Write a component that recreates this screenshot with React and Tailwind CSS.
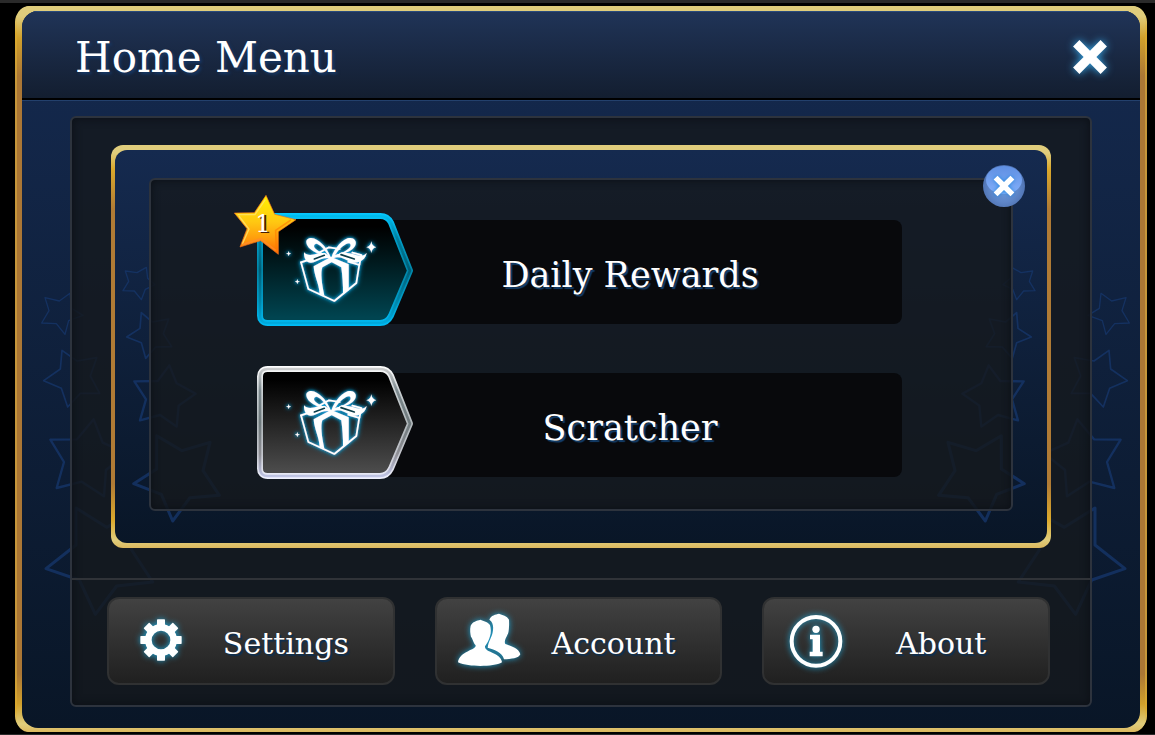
import React from "react";

const OUTER_STARS = [
  "135,173 178,183 210,160 215,205 249,226 206,242 195,283 169,251 125,249 147,212",
  "186,331 231,363 290,353 271,408 299,460 241,460 203,501 184,445 131,422 181,387",
  "281,538 308,608 380,640 318,690 312,769 245,725 170,744 192,666 151,599 231,598",
  "228,804 320,862 404,815 395,930 458,1026 350,1038 286,1123 238,1020 138,986 228,915",
];

const INNER_STARS = [
  "376,93 411,98 439,82 443,115 465,134 436,148 424,179 403,153 369,152 386,124",
  "424,218 457,246 506,237 490,281 515,320 467,321 437,355 424,308 380,291 420,265",
  "508,376 530,430 587,461 536,497 530,560 480,525 420,541 438,478 403,424 473,423",
  "470,587 546,632 630,607 609,692 658,766 570,773 518,843 484,763 401,731 470,687",
];

const STAR_STROKES = [4, 5, 7, 9];

function StarTrail({ stars, viewBox, className }) {
  return (
    <svg viewBox={viewBox} className={className} aria-hidden="true">
      {stars.map((points, i) => (
        <polygon
          key={points}
          points={points}
          fill="none"
          stroke="#16366a"
          strokeOpacity="0.78"
          strokeWidth={STAR_STROKES[i]}
          strokeLinejoin="round"
        />
      ))}
    </svg>
  );
}

function Cross({ className }) {
  return (
    <svg viewBox="0 0 34 34" className={className} aria-hidden="true">
      <path
        d="M7 1 17 11 27 1 33 7 23 17 33 27 27 33 17 23 7 33 1 27 11 17 1 7Z"
        fill="#fff"
      />
    </svg>
  );
}

const TONES = {
  cyan: {
    edge: ["#06c8ff", "#009cc8", "#0186a8", "#009cc8", "#00bdf6"],
    core: ["#00c4f8", "#00809f", "#005f77", "#0085a8", "#00aee4"],
    fill: ["#000", "#001316", "#004450"],
  },
  silver: {
    edge: ["#ffffff", "#c9cfd2", "#b0b7ba", "#c3c5cc", "#f0f2ff"],
    core: ["#d5d5d5", "#7c898e", "#6f7a7d", "#8f8f95", "#c6cbee"],
    fill: ["#000", "#161616", "#4b4b4b"],
  },
};

const STOPS = ["0", "0.22", "0.5", "0.78", "1"];
const TAG =
  "M128 93H466C483 93 491 100 498 113L555 257L498 392C491 406 481 414 465 414H128C113 414 105 405 105 392V115C105 102 113 93 128 93Z";

function GiftTag({ tone }) {
  const t = TONES[tone];
  return (
    <svg viewBox="96 84 471 339" className="relative z-10 h-[113px] w-[157px] shrink-0" aria-hidden="true">
      <defs>
        <linearGradient id={`${tone}-edge`} gradientUnits="userSpaceOnUse" x1="0" x2="0" y1="84" y2="423">
          {t.edge.map((c, i) => (
            <stop key={i} offset={STOPS[i]} stopColor={c} />
          ))}
        </linearGradient>
        <linearGradient id={`${tone}-core`} gradientUnits="userSpaceOnUse" x1="0" x2="0" y1="84" y2="423">
          {t.core.map((c, i) => (
            <stop key={i} offset={STOPS[i]} stopColor={c} />
          ))}
        </linearGradient>
        <linearGradient id={`${tone}-fill`} x1="0" x2="0" y1="0" y2="1">
          <stop offset="0.1" stopColor={t.fill[0]} />
          <stop offset="0.35" stopColor={t.fill[1]} />
          <stop offset="0.95" stopColor={t.fill[2]} />
        </linearGradient>
        <filter id={`${tone}-glow`} x="-20%" y="-20%" width="140%" height="140%">
          <feDropShadow dx="0" dy="0" stdDeviation="4" floodColor="#1fb4ec" />
          <feDropShadow dx="0" dy="0" stdDeviation="7" floodColor="#1286b8" />
        </filter>
      </defs>
      <path d={TAG} fill={`url(#${tone}-fill)`} stroke={`url(#${tone}-edge)`} strokeWidth="18" strokeLinejoin="round" />
      <path d={TAG} fill="none" stroke={`url(#${tone}-core)`} strokeWidth="8" strokeLinejoin="round" />
      <g filter={`url(#${tone}-glow)`}>
        <g fill="none" stroke="#fff" strokeWidth="5" strokeLinejoin="round" strokeLinecap="round">
          <path d="M228 232 250 312 328 348 394 294 403 238" />
          <path d="M228 232 262 221M282 203 312 187 344 192M382 203 409 210 403 240 370 230" />
          <path d="M248 222 290 212 318 220 352 205" strokeWidth="4" />
        </g>
        <g fill="#fff">
          <path d="M266 244 318 216 322 230 292 247C286 262 290 296 298 332L284 326C282 296 268 274 266 244Z" />
          <path d="M318 216 371 238 371 316 354 328C355 300 352 270 349 247L318 230Z" />
          <path
            fillRule="evenodd"
            d="M320 224C304 210 248 204 244 172C243 158 262 154 276 165C298 178 310 198 320 224ZM310 213C302 198 290 182 276 176C266 176 264 184 272 192C284 202 298 208 310 213Z"
          />
          <path
            fillRule="evenodd"
            d="M318 224C322 200 344 170 368 160C384 155 397 166 391 181C380 206 334 208 318 224ZM330 211C346 206 364 200 375 187C381 177 373 171 362 178C348 186 338 197 330 211Z"
          />
          <path d="M237 202C246 212 258 212 284 204L300 204 320 220C298 216 284 224 266 232C248 238 236 224 237 202Z" />
          <path d="M425 203C418 214 404 214 380 206L350 202 320 220C342 212 358 220 376 231C396 238 422 226 425 203Z" />
        </g>
        <path d="M268 222 298 211M348 209 388 222" stroke="#0a3d4a" strokeWidth="5" strokeLinecap="round" />
        <path
          d="M439 169Q441 184 454 187Q441 189 439 204Q437 189 424 187Q437 184 439 169ZM191 198 193 204 199 206 193 208 191 214 189 208 183 206 189 204ZM217 282 219 288 225 290 219 292 217 298 215 292 209 290 215 288Z"
          fill="#fff"
        />
      </g>
    </svg>
  );
}

function StarBadge({ count }) {
  return (
    <span className="absolute -left-6 -top-5 z-20 flex h-16 w-16 items-center justify-center">
      <svg viewBox="22 22 192 192" className="absolute inset-0 h-16 w-16" aria-hidden="true">
        <defs>
          <linearGradient id="badge-gold" x1="0" x2="0" y1="0" y2="1">
            <stop offset="0" stopColor="#fff200" />
            <stop offset="0.45" stopColor="#ffc812" />
            <stop offset="0.75" stopColor="#ff9a0c" />
            <stop offset="1" stopColor="#ff6a00" />
          </linearGradient>
        </defs>
        <polygon
          points="121,29 147,86 211,102 158,138 158,206 105,165 43,184 64,129 26,82 86,81"
          fill="url(#badge-gold)"
          stroke="#f0701c"
          strokeWidth="2"
          strokeLinejoin="round"
        />
        <path d="M36 87 88 87 119 42M50 175 70 130 40 91" fill="none" stroke="#ffe36a" strokeWidth="4" strokeOpacity="0.8" />
        <path d="M50 177 105 159 150 194" fill="none" stroke="#ff8c2a" strokeWidth="5" strokeOpacity="0.8" />
        <path d="M196 103 150 134 152 190" fill="none" stroke="#ff7a00" strokeWidth="5" strokeOpacity="0.6" />
      </svg>
      <span className="relative pb-0.5 pr-1 text-[24px] leading-none text-white [text-shadow:2px_1px_0_#4a1e00]">{count}</span>
    </span>
  );
}

function RewardRow({ label, tone, badge }) {
  return (
    <button type="button" className="relative flex w-full items-center text-left">
      <GiftTag tone={tone} />
      {badge ? <StarBadge count={badge} /> : null}
      <span className="-ml-10 mt-1 flex h-[104px] flex-1 items-center justify-center rounded-lg bg-[#08090c] pr-4 pt-2 text-[35px] leading-none text-white [text-shadow:2px_2px_1px_#143f6c]">
        {label}
      </span>
    </button>
  );
}

const ICON = "h-16 w-16 shrink-0 overflow-visible drop-shadow-[0_0_3px_#1ea4d4]";

function GearIcon() {
  return (
    <svg viewBox="-96 -93 192 192" className={ICON} aria-hidden="true">
      <g fill="#fff">
        {[0, 45, 90, 135, 180, 225, 270, 315].map((a) => (
          <rect key={a} x="-12" y="-62" width="24" height="24" rx="2" transform={`rotate(${a})`} />
        ))}
      </g>
      <circle r="38" fill="none" stroke="#fff" strokeWidth="20" />
    </svg>
  );
}

function PeopleIcon() {
  return (
    <svg viewBox="96 72 192 192" className={ICON} aria-hidden="true">
      <g fill="#fff">
        <path d="M222 86C212 89 198 90 193 104C205 112 206 126 203 142C201 156 190 170 188 188C206 194 232 200 237 223C258 222 282 220 286 208C282 190 260 184 241 177C236 168 244 158 248 148C252 142 253 118 252 104C246 92 232 90 222 86Z" />
        <path d="M166 104C156 107 142 110 137 122C134 134 136 146 138 156C143 160 144 172 152 181C154 196 104 198 99 232C116 240 142 243 166 243C192 243 218 240 231 232C228 202 178 204 180 184C186 176 192 166 195 154C199 144 198 130 195 120C188 110 176 108 166 104Z" />
      </g>
    </svg>
  );
}

function InfoIcon() {
  return (
    <svg viewBox="102 72 192 192" className={ICON} aria-hidden="true">
      <circle cx="198" cy="169" r="73" fill="none" stroke="#fff" strokeWidth="12" />
      <circle cx="198" cy="133" r="11" fill="#fff" />
      <path d="M180 149H210V200H218V214H179V200H188V163H180Z" fill="#fff" />
    </svg>
  );
}

function MenuButton({ icon, label }) {
  return (
    <button
      type="button"
      className="flex h-[88px] min-w-0 flex-1 items-center rounded-xl border-2 border-[#303132] bg-linear-to-b from-[#424242] to-[#202020] pl-5 pr-3.5"
    >
      {icon}
      <span className="flex-1 pt-1.5 text-center text-[30px] leading-none text-white [text-shadow:2px_2px_1px_#0d2f50]">
        {label}
      </span>
    </button>
  );
}

export default function App() {
  return (
    <div className="flex min-h-screen flex-col border-b border-t-[3px] border-b-[#2a2a2a] border-t-[#2a2a2a] bg-black pb-0.5 pl-[15px] pr-2 pt-[3px] font-['DejaVu_Serif',serif]">
      <main className="flex flex-1 flex-col rounded-2xl bg-[linear-gradient(to_bottom,#e0cd7c_0,#e0cd7c_8px,#dba92c_28px,#c6963a_80px,#c6963a_calc(100%-70px),#dba92c_calc(100%-24px),#e0cd7c_calc(100%-6px),#dcb85e_100%)] px-0.5">
        <div className="flex flex-1 flex-col rounded-xl bg-[linear-gradient(to_bottom,#e0cd7c_0,#e0cd7c_10px,#d0a02c_32px,#ab7735_70px,#ab7735_calc(100%-58px),#d0a02c_calc(100%-28px),#e0cd7c_calc(100%-8px),#dcb85e_100%)] px-[5px] pb-1 pt-[5px]">
          <div className="relative flex flex-1 flex-col overflow-hidden rounded-[16px] bg-linear-to-b from-[#152a50] to-[#091627]">
            <header className="flex h-[89px] items-center justify-between border-b-2 border-black bg-linear-to-b from-[#203458] to-[#131e30] pl-[53px] pr-8 shadow-[inset_0_1px_0_#294a7c]">
              <h1 className="pt-1.5 text-[42px] leading-none text-white [text-shadow:2px_2px_3px_#153a6b]">Home Menu</h1>
              <button type="button" aria-label="Close menu" className="pt-1">
                <Cross className="h-9 w-9 drop-shadow-[0_0_4px_#38aef0]" />
              </button>
            </header>

            <div className="relative flex flex-1 flex-col border-t border-[#23406c] px-12 pb-[21px] pt-[15px]">
              <StarTrail stars={OUTER_STARS} viewBox="66 0 402 1152" className="absolute left-0 top-[139px] h-[384px] w-[134px]" />
              <StarTrail stars={OUTER_STARS} viewBox="66 0 402 1152" className="absolute -right-[9px] top-[139px] h-[384px] w-[134px] -scale-x-100" />

              <div className="relative flex flex-1 flex-col rounded-md border-2 border-[#2d333d] bg-[#15191d]/80 shadow-[inset_0_0_10px_#0b0f15]">
                <div className="px-[39px] pb-[30px] pt-[27px]">
                  <section className="rounded-xl bg-[linear-gradient(to_bottom,#e0cd7c_0,#e0cd7c_8px,#dba92c_24px,#b07b35_64px,#b07b35_calc(100%-64px),#dba92c_calc(100%-28px),#e0cd7c_calc(100%-8px),#dcb85e_100%)] px-1 py-[5px]">
                    <div className="relative overflow-hidden rounded-xl bg-linear-to-b from-[#152a4f] to-[#091627] pb-8 pl-[34px] pr-[34px] pt-7">
                      <StarTrail stars={INNER_STARS} viewBox="345 0 324 870" className="absolute left-0 top-[90px] h-[290px] w-[108px]" />
                      <StarTrail stars={INNER_STARS} viewBox="345 0 324 870" className="absolute right-1 top-[90px] h-[290px] w-[108px] -scale-x-100" />
                      <div className="relative flex flex-col gap-10 rounded-md border-2 border-[#2d333d] bg-[#15191d]/80 pb-[30px] pl-[106px] pr-[109px] pt-[33px] shadow-[inset_0_0_8px_#0b0f15]">
                        <RewardRow label="Daily Rewards" tone="cyan" badge={1} />
                        <RewardRow label="Scratcher" tone="silver" />
                      </div>
                      <button
                        type="button"
                        aria-label="Close rewards"
                        className="absolute right-[22px] top-[15px] flex h-[42px] w-[42px] items-center justify-center overflow-hidden rounded-full bg-[radial-gradient(circle_at_50%_55%,#6f9be0_0,#5f86c8_45%,#3c5c98_100%)]"
                      >
                        <span className="absolute inset-x-[3px] top-px h-7 rounded-[50%] bg-linear-to-b from-[#5f8fe2] to-[#84b0fb]" />
                        <Cross className="relative h-[22px] w-[22px] drop-shadow-[0_0_2px_#1c86dc]" />
                      </button>
                    </div>
                  </section>
                </div>

                <nav className="flex flex-1 items-start gap-10 border-t-2 border-[#303338] pb-[19px] pl-[35px] pr-10 pt-[17px]">
                  <MenuButton icon={<GearIcon />} label="Settings" />
                  <MenuButton icon={<PeopleIcon />} label="Account" />
                  <MenuButton icon={<InfoIcon />} label="About" />
                </nav>
              </div>
            </div>
          </div>
        </div>
      </main>
    </div>
  );
}
